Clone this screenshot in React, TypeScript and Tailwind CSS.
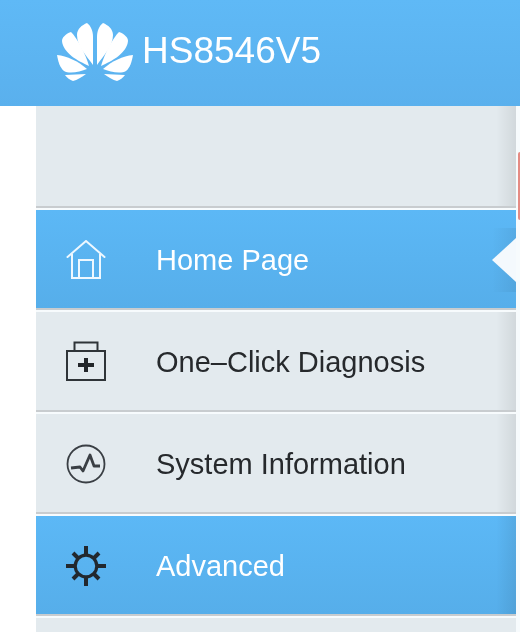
import type { ReactNode } from 'react';

function PetalHalf() {
    return (
        <>
            <path d="M36 42C29 32 20 23 20 12c0-6 5-10 10-12 4 3 6 8 6 14z" />
            <path d="M32 43C21 38 6 30 5 18c0-3 3-7 9-9 6 6 14 20 18 34z" />
            <path d="M0 32c10 1 21 6 30 14-7 3-18 5-23 2-4-3-6-10-7-16z" />
            <path d="M8 52l21-1c-4 3-9 6-13 7-3-1-6-3-8-6z" />
        </>
    );
}

function Petals() {
    return (
        <svg viewBox="0 0 76 58" className="h-[58px] w-[76px] blur-[0.6px]" fill="#ffffff">
            <PetalHalf />
            <g transform="matrix(-1 0 0 1 76 0)">
                <PetalHalf />
            </g>
        </svg>
    );
}

function HomeIcon() {
    return (
        <svg viewBox="0 0 40 40" className="h-10 w-10 blur-[0.4px]" fill="none" stroke="#eef8ff" strokeWidth="2">
            <path d="M1.500 18 20 2l18.500 16" strokeLinecap="round" strokeLinejoin="round" />
            <path d="M6 15v24h28V15" />
            <path d="M13 39V21h14v18" />
        </svg>
    );
}

function KitIcon() {
    return (
        <svg viewBox="0 0 40 40" className="h-10 w-10 blur-[0.4px]" fill="none" stroke="#2f3438" strokeWidth="2">
            <rect x="1" y="10" width="38" height="29" />
            <path d="M8.500 10V1.500h23V10" />
            <path d="M20 17v14M12 24h16" strokeWidth="4" stroke="#22262a" />
        </svg>
    );
}

function PulseIcon() {
    return (
        <svg viewBox="0 0 40 40" className="mt-0.5 h-10 w-10 blur-[0.4px]" fill="none" stroke="#3a3f44" strokeWidth="1.800">
            <circle cx="20" cy="20" r="18.500" />
            <path d="M5 24l9-1 3 4 7-16 4 11h6" strokeWidth="2.800" strokeLinejoin="round" />
        </svg>
    );
}

function GearIcon() {
    return (
        <svg viewBox="0 0 40 40" className="mt-0.5 h-10 w-10 blur-[0.4px]" fill="none" stroke="#22282e">
            <circle cx="20" cy="20" r="10.800" strokeWidth="3.200" />
            <path d="M20 0v9M20 31v9M0 20h9M31 20h9M7 7l5 5M28 28l5 5M33 7l-5 5M12 28l-5 5" strokeWidth="4" />
        </svg>
    );
}

function MenuRow({
    icon,
    label,
    active,
    flat,
}: {
    icon: ReactNode;
    label: string;
    active?: boolean;
    flat?: boolean;
}) {
    return (
        <div className="mb-0.5 border-b-2 border-[#c8cccf]">
            <div
                className={
                    active
                        ? 'relative flex h-[98px] items-center bg-gradient-to-b from-[#5cb8f6] to-[#56aeea] text-white'
                        : 'relative flex h-[98px] items-center bg-[#e3eaee] text-[#26292c]'
                }
            >
                <div className="ml-[30px] mr-[50px] flex w-10 justify-center">{icon}</div>
                <span className="pt-0.5 text-[29px] leading-none blur-[0.3px]">{label}</span>
                {!flat && (
                    <div className="absolute inset-y-0 right-0 w-5 bg-gradient-to-r from-transparent to-[#00000014]" />
                )}
            </div>
        </div>
    );
}

export default function App() {
    return (
        <div className="relative h-[632px] w-[520px] overflow-hidden bg-[#f7fbfd] font-['Liberation_Sans',sans-serif]">
            <header className="flex h-[106px] items-center bg-gradient-to-b from-[#5fb9f6] to-[#5ab0ed] pl-[57px] pb-[2px]">
                <Petals />
                <h1 className="mb-[3px] ml-[9px] text-[37px] font-normal leading-none text-white blur-[0.3px]">HS8546V5</h1>
            </header>

            <div className="flex">
                <div className="w-9 self-stretch bg-white" />
                <nav className="relative w-[480px]">
                    <div className="relative mb-0.5 h-[102px] border-b-2 border-[#c8cccf] bg-[#e3eaee]">
                        <div className="absolute inset-y-0 right-0 w-5 bg-gradient-to-r from-transparent to-[#00000014]" />
                    </div>
                    <MenuRow icon={<HomeIcon />} label="Home Page" active flat />
                    <MenuRow icon={<KitIcon />} label="One–Click Diagnosis" />
                    <MenuRow icon={<PulseIcon />} label="System Information" />
                    <MenuRow icon={<GearIcon />} label="Advanced" active />
                    <div className="h-[98px] bg-[#e3eaee]" />

                    {/* pointer on the selected row, with its soft shade */}
                    <div className="absolute right-0 top-[122px] h-[64px] w-6 bg-gradient-to-r from-transparent to-[#00000010]" />
                    <div className="absolute right-0 top-[132px] h-0 w-0 border-y-[22px] border-r-[24px] border-y-transparent border-r-[#f4f9fd] blur-[0.4px]" />
                </nav>
            </div>

            {/* scrollbar sliver from the page behind */}
            <div className="absolute right-0 top-[152px] h-[68px] w-[2px] rounded-l-sm bg-[#e58b84]" />
        </div>
    );
}
